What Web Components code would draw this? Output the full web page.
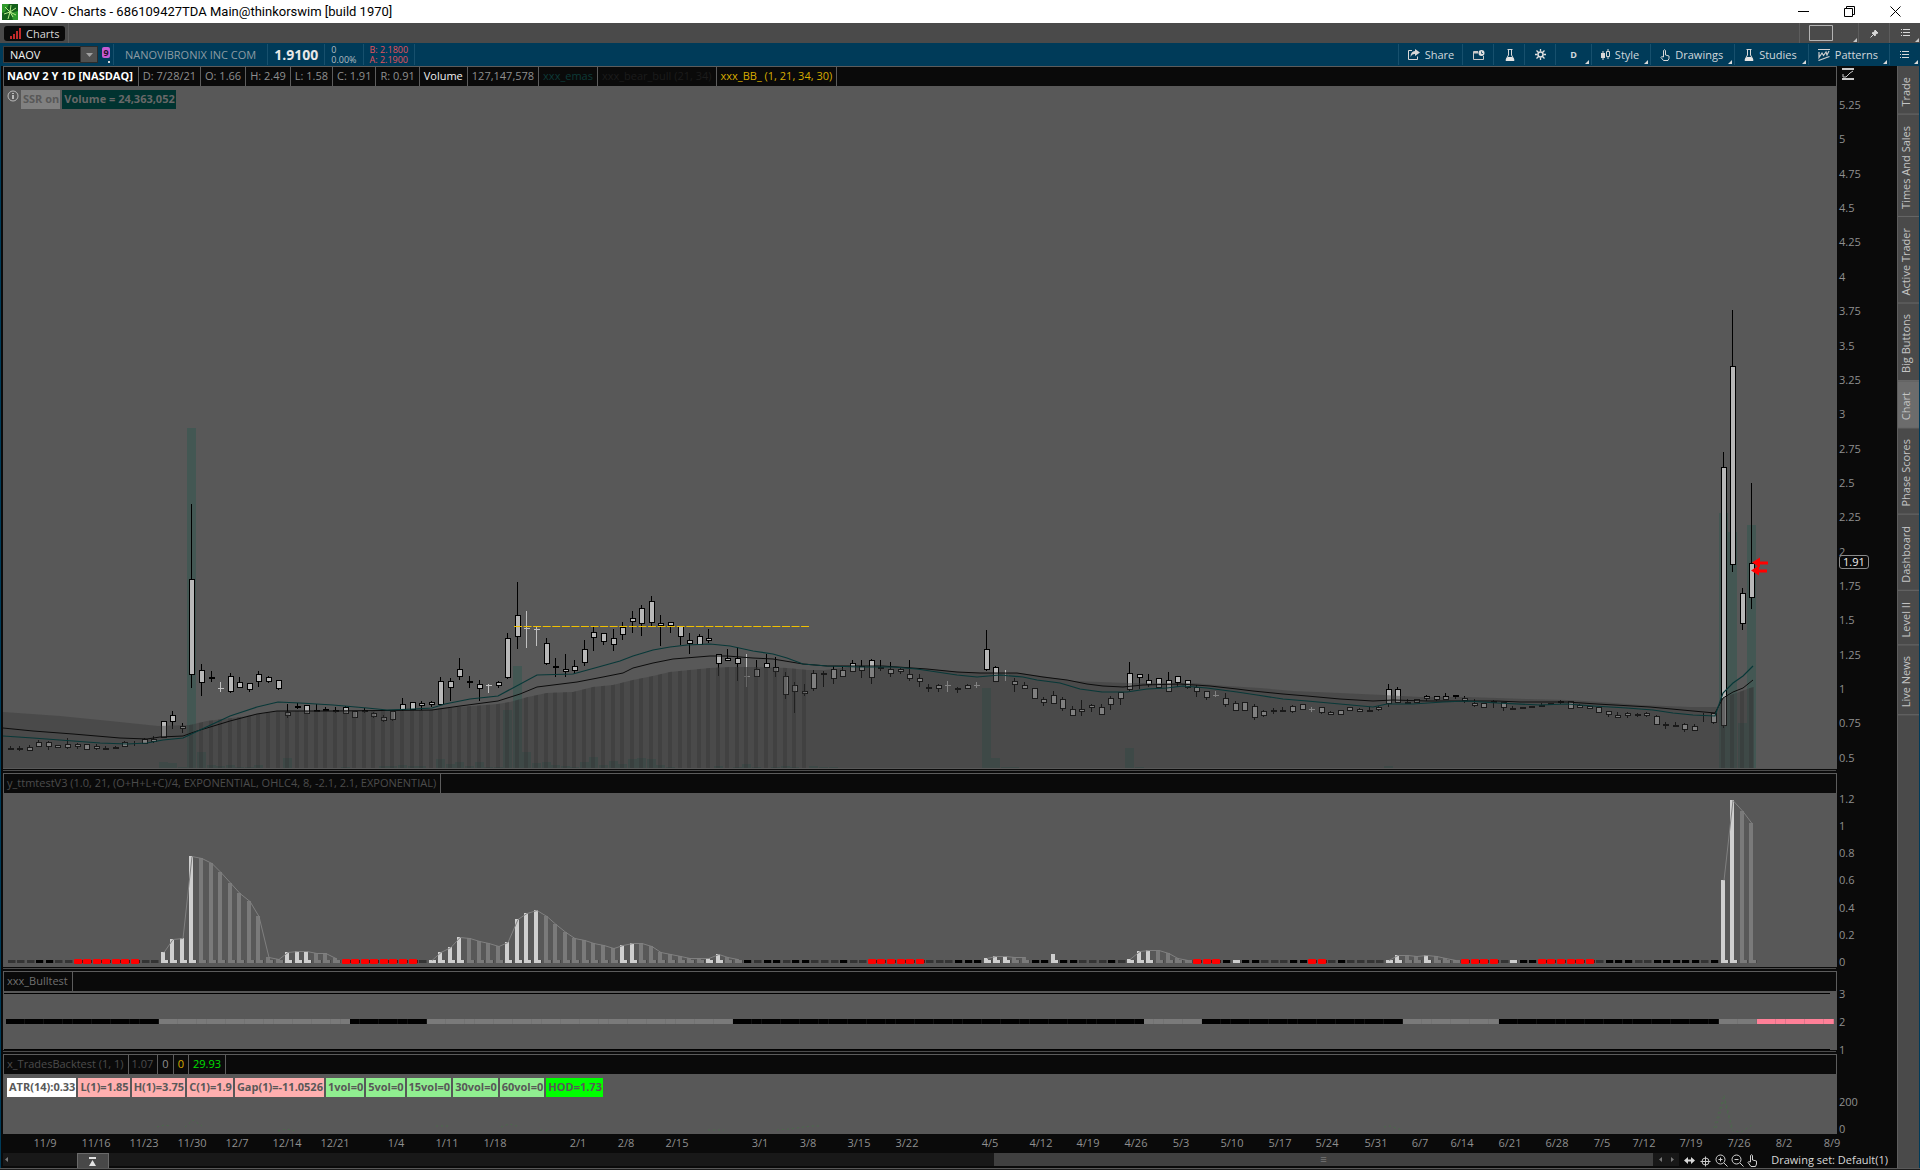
<!DOCTYPE html>
<html lang="en">

<head>
    <meta charset="UTF-8">
    <meta name="viewport" content="width=device-width, initial-scale=1.0">
    <title>NAOV - Charts</title>
    <style>
        html,
        body {
            height: 100%;
            margin: 0;
        }

        body {
            background: #0a0a0a;
            color: #8f8f8f;
            font: 11px/16px "Open Sans", "Noto Sans", sans-serif;
            overflow: hidden;
        }
    </style>
</head>

<body>
    <template id="trading-app">
        <style>
            :host {
                display: flex;
                flex-direction: column;
                height: 100%;
                min-height: 600px;
            }

            main {
                display: flex;
                flex: 1;
                min-height: 0;
                border-left: 1px solid #003b59;
                border-right: 1px solid #003b59;
            }

            .charts {
                display: flex;
                flex-direction: column;
                flex: 1;
                min-width: 0;
                padding-left: 2px;
            }

            .labels {
                display: flex;
                gap: 2px;
                padding: 4px;
            }

            .floor {
                height: 1px;
                background: #585858;
                border-bottom: 1px solid #1c1c1c;
            }
        </style>
        <window-title>NAOV - Charts - 686109427TDA Main@thinkorswim [build 1970]</window-title>
        <tab-strip></tab-strip>
        <quote-bar></quote-bar>
        <main>
            <div class="charts">
                <study-pane size="707" axis="5.25 5 4.75 4.5 4.25 4 3.75 3.5 3.25 3 2.75 2.5 2.25 2 1.75 1.5 1.25 1 0.75 0.5"
                    mark="1.91">
                    <study-cell slot="head" tone="title">NAOV 2 Y 1D [NASDAQ]</study-cell>
                    <study-cell slot="head">D: 7/28/21</study-cell>
                    <study-cell slot="head">O: 1.66</study-cell>
                    <study-cell slot="head">H: 2.49</study-cell>
                    <study-cell slot="head">L: 1.58</study-cell>
                    <study-cell slot="head">C: 1.91</study-cell>
                    <study-cell slot="head">R: 0.91</study-cell>
                    <study-cell slot="head" tone="white">Volume</study-cell>
                    <study-cell slot="head">127,147,578</study-cell>
                    <study-cell slot="head" tone="teal">xxx_emas</study-cell>
                    <study-cell slot="head" tone="dark">xxx_bear_bull (21, 34)</study-cell>
                    <study-cell slot="head" tone="gold">xxx_BB_ (1, 21, 34, 30)</study-cell>
                    <price-plot></price-plot>
                    <div class="labels" slot="over">
                        <svg width="12" height="12" viewBox="0 0 12 12" fill="none" stroke="#b8b8b8">
                            <circle cx="6" cy="6" r="5" />
                            <path d="M6 5v4M6 3v1" stroke-width="2" />
                        </svg>
                        <value-label tone="ssr">SSR on</value-label>
                        <value-label tone="volume">Volume = 24,363,052</value-label>
                    </div>
                </study-pane>
                <study-pane size="198" axis="1.2 1 0.8 0.6 0.4 0.2 0">
                    <study-cell slot="head" tone="dim">y_ttmtestV3 (1.0, 21, (O+H+L+C)/4, EXPONENTIAL, OHLC4, 8, -2.1, 2.1, EXPONENTIAL)</study-cell>
                    <momentum-plot></momentum-plot>
                </study-pane>
                <study-pane size="83" axis="3 2 1">
                    <study-cell slot="head" tone="mid">xxx_Bulltest</study-cell>
                    <trend-plot></trend-plot>
                </study-pane>
                <study-pane size="80" axis="200 0" last>
                    <study-cell slot="head" tone="dim">x_TradesBacktest (1, 1)</study-cell>
                    <study-cell slot="head" tone="dim">1.07</study-cell>
                    <study-cell slot="head">0</study-cell>
                    <study-cell slot="head" tone="gold">0</study-cell>
                    <study-cell slot="head" tone="green">29.93</study-cell>
                    <backtest-plot></backtest-plot>
                    <div class="labels" slot="over">
                        <value-label tone="white">ATR(14):0.33</value-label>
                        <value-label tone="pink">L(1)=1.85</value-label>
                        <value-label tone="pink">H(1)=3.75</value-label>
                        <value-label tone="pink">C(1)=1.9</value-label>
                        <value-label tone="pink">Gap(1)=-11.0526</value-label>
                        <value-label tone="light">1vol=0</value-label>
                        <value-label tone="light">5vol=0</value-label>
                        <value-label tone="light">15vol=0</value-label>
                        <value-label tone="light">30vol=0</value-label>
                        <value-label tone="light">60vol=0</value-label>
                        <value-label tone="lime">HOD=1.73</value-label>
                    </div>
                </study-pane>
                <date-axis></date-axis>
                <chart-footer></chart-footer>
            </div>
            <side-tabs></side-tabs>
        </main>
        <div class="floor"></div>
    </template>

    <template id="window-title">
        <style>
            :host {
                display: flex;
                align-items: center;
                height: 23px;
                padding-right: 2px;
                background: #fff;
                color: #000;
                font-family: Roboto, "Noto Sans", sans-serif;
                font-size: 13px;
            }

            .logo {
                margin: 0 5px 0 2px;
            }

            h1 {
                flex: 1;
                margin: 0;
                font-weight: 400;
                font-size: inherit;
            }

            button {
                display: grid;
                place-items: center;
                width: 46px;
                height: 23px;
                padding: 0;
                border: 0;
                background: none;
            }
        </style>
        <svg class="logo" width="16" height="16" viewBox="0 0 16 16">
            <path fill="#14601a" d="M0 0h16v16H0z" />
            <path fill="#2f9a2c" d="M0 0h7L3 8 0 9zM9 9l7-2v9h-5z" />
            <path stroke="#b9ec8a" fill="none" d="M8 8 3 3M8 8l1-7M8 8l6-4M8 8l6 3M8 8 6 15M8 8l-6 2M8 8l3 5" />
        </svg>
        <h1><slot></slot></h1>
        <button aria-label="Minimize"><svg width="11" height="11" stroke="#000"><path d="M0 5.5h11" /></svg></button>
        <button aria-label="Restore"><svg width="11" height="11" fill="none" stroke="#000"><path d="M.5 2.5h8v8h-8zM2.5 2V.5h8v8H9" /></svg></button>
        <button aria-label="Close"><svg width="11" height="11" stroke="#000"><path d="M.5 .5l10 10M10.5 .5l-10 10" /></svg></button>
    </template>

    <template id="tab-strip">
        <style>
            :host {
                display: flex;
                justify-content: space-between;
                height: 20px;
                background: #4a4a4a;
            }

            nav,
            .tools {
                display: flex;
                align-items: center;
            }

            nav {
                padding: 0 3px 0 4px;
                border-right: 1px solid #5c5c5c;
            }

            nav button {
                display: flex;
                align-items: center;
                gap: 5px;
                height: 15px;
                padding: 0 6px;
                border: 0;
                border-radius: 3px;
                background: #0a0a0a;
                color: #d8d8d8;
                font: inherit;
                line-height: 15px;
            }

            .tools button {
                position: relative;
                display: grid;
                place-items: center;
                width: 31px;
                height: 20px;
                padding: 0;
                border: 0;
                border-left: 1px solid #5c5c5c;
                background: none;
            }

            .tools button.wide {
                width: 59px;
                justify-items: start;
                padding-left: 9px;
            }

            .menu::after {
                content: "";
                position: absolute;
                right: 1px;
                bottom: 1px;
                border: 2px solid;
                border-color: transparent #c8c8c8 #c8c8c8 transparent;
            }
        </style>
        <nav>
            <button>
                <svg width="11" height="11" fill="#c22a2a"><path d="M0 8h2v3H0zM3 6h2v5H3zM6 3h2v8H6zM9 0h2v11H9z" /></svg>Charts
            </button>
        </nav>
        <div class="tools">
            <button class="wide menu" aria-label="Layout"><svg width="24" height="16" fill="none" stroke="#b4b4b4"><path d="M.5 .5h23v15H.5z" /></svg></button>
            <button aria-label="Pin"><svg width="9" height="9" viewBox="0 0 9 9" fill="#d8d8d8" stroke="#d8d8d8"><path d="M5 1l3 3-2 .5L5 7 2 4l2.5-1zM3 6 .5 8.5" /></svg></button>
            <button class="menu" aria-label="Menu"><svg width="9" height="8" stroke="#d8d8d8"><path d="M0 .5h1M2 .5h7M0 3.5h1M2 3.5h7M0 6.5h1M2 6.5h7" /></svg></button>
        </div>
    </template>

    <template id="quote-bar">
        <style>
            :host {
                display: flex;
                align-items: stretch;
                height: 21px;
                padding: 1px 0 1px 3px;
                background: #003b59;
            }

            form {
                display: flex;
                align-items: center;
                margin: 0;
            }

            input {
                box-sizing: border-box;
                width: 77px;
                height: 17px;
                padding: 0 6px;
                border: 1px solid #3b3b3b;
                border-right: 0;
                background: #0a0a0a;
                color: #f0f0f0;
                font: inherit;
            }

            form button {
                width: 18px;
                height: 17px;
                padding: 0;
                border: 1px solid #2c2c2c;
                background: #505050;
            }

            form svg {
                display: block;
                margin: auto;
            }

            .link {
                position: relative;
                width: 8px;
                height: 11px;
                margin: 3px 3px 0 4px;
                padding: 0;
                border: 0;
                border-radius: 2px;
                background: #c45ad2;
                color: #24102a;
                font: 700 9px/11px "Open Sans", sans-serif;
            }

            .link::after {
                content: "";
                position: absolute;
                right: 0;
                bottom: -5px;
                border: 1px solid #d8d8d8;
            }

            .field {
                display: flex;
                align-items: center;
                padding: 0 11px;
                border-left: 1px solid #17506d;
                color: #8d9ba3;
            }

            .last {
                padding: 0 6px;
                color: #e8e8e8;
                font-size: 14px;
                font-weight: 700;
            }

            .pair {
                flex-direction: column;
                align-items: flex-start;
                justify-content: center;
                padding: 0 6px;
                color: #b4bcc0;
                font-size: 9px;
                line-height: 10px;
            }

            .ask {
                color: #e0525c;
                border-right: 1px solid #17506d;
            }

            .tools {
                display: flex;
                margin-left: auto;
            }
        </style>
        <form>
            <input aria-label="Symbol" value="NAOV">
            <button type="button" aria-label="Symbol list"><svg width="7" height="4" fill="#a0a0a0"><path d="M0 0h7L3.5 4z" /></svg></button>
        </form>
        <button class="link" aria-label="Link group">9</button>
        <div class="field">NANOVIBRONIX INC COM</div>
        <div class="field last">1.9100</div>
        <div class="field pair"><span>0</span><span>0.00%</span></div>
        <div class="field pair ask"><span>B: 2.1800</span><span>A: 2.1900</span></div>
        <div class="tools">
            <tool-button icon="share">Share</tool-button>
            <tool-button icon="snapshot"></tool-button>
            <tool-button icon="flask"></tool-button>
            <tool-button icon="gear"></tool-button>
            <tool-button icon="none" menu>D</tool-button>
            <tool-button icon="style" menu>Style</tool-button>
            <tool-button icon="hand" menu>Drawings</tool-button>
            <tool-button icon="flask" menu>Studies</tool-button>
            <tool-button icon="patterns" menu>Patterns</tool-button>
            <tool-button icon="list" menu></tool-button>
        </div>
    </template>

    <template id="side-tabs">
        <style>
            :host {
                display: flex;
                flex-direction: column;
                width: 21px;
                background: #4a4a4a;
                border-left: 1px solid #5e5e5e;
            }

            button {
                padding: 7px 0 11px 5px;
                border: 0;
                border-top: 1px solid #686868;
                background: none;
                color: #c4c4c4;
                font: inherit;
                writing-mode: vertical-rl;
                transform: rotate(180deg);
                text-align: center;
            }

            button[aria-selected=true] {
                background: #6c6c6c;
            }
        </style>
    </template>

    <template id="chart-footer">
        <style>
            :host {
                display: flex;
                align-items: flex-start;
                height: 15px;
            }

            .track {
                display: flex;
                flex: 1;
                height: 13px;
                background: #181818;
            }

            .gap {
                box-sizing: border-box;
                display: flex;
                flex: 72;
                align-items: center;
                padding-left: 2px;
            }

            .lift {
                display: grid;
                place-items: center;
                width: 32px;
                height: 16px;
                padding: 0;
                border: 1px solid #6a6a6a;
                border-bottom: 0;
                background: #484848;
            }

            .space {
                flex: 887;
            }

            .thumb {
                flex: 661;
                background: #404040;
                text-align: center;
                color: #777;
                line-height: 12px;
            }

            .ends {
                display: flex;
                align-items: center;
                justify-content: space-around;
                width: 26px;
            }

            .tools {
                display: flex;
                align-items: center;
                gap: 3px;
                padding: 0 9px 0 4px;
                color: #d8d8d8;
            }

            .tools button {
                display: flex;
                padding: 0;
                border: 0;
                background: none;
                color: inherit;
                font: inherit;
                line-height: 14px;
            }

            .tools .set {
                margin-left: 10px;
            }
        </style>
        <div class="track">
            <div class="gap"><svg width="4" height="7" fill="#777"><path d="M3 1v5L0 3.5z" /></svg></div>
            <button class="lift" aria-label="Expand"><svg width="9" height="9" fill="#e4e4e4"><path d="M1 0h7v2H1zM4.5 3 8 9H1z" /></svg></button>
            <div class="space"></div>
            <div class="thumb">&#8801;</div>
            <div class="ends">
                <svg width="4" height="7" fill="#777"><path d="M4 1v5L1 3.5z" /></svg>
                <svg width="4" height="7" fill="#777"><path d="M0 1v5l3-2.5z" /></svg>
            </div>
        </div>
        <div class="tools">
            <button aria-label="Pan"><svg width="13" height="13" fill="#d8d8d8"><path d="M1 6.5 5 3v7zM12 6.5 8 3v7zM5 5.5h3v2H5z" /></svg></button>
            <button aria-label="Crosshair"><svg width="13" height="13" fill="none" stroke="#c8c8c8"><circle cx="6.5" cy="7.5" r="3.5" /><path d="M6.5 2.5v10M1.5 7.5h10" /></svg></button>
            <button aria-label="Zoom in"><svg width="13" height="13" fill="none" stroke="#d0d0d0"><circle cx="5.5" cy="5.5" r="4.5" /><path d="M9 9l3.5 3.5M3.5 5.5h4M5.5 3.5v4" /></svg></button>
            <button aria-label="Zoom out"><svg width="13" height="13" fill="none" stroke="#d0d0d0"><circle cx="5.5" cy="5.5" r="4.5" /><path d="M9 9l3.5 3.5M3.5 5.5h4" /></svg></button>
            <button aria-label="Pointer"><svg width="11" height="13" fill="none" stroke="#d0d0d0"><path d="M3.5 7V1.5q1-1.5 2 0V6l4 1v3l-1 2.5H4L1 8.5q0-1.5 2.5-.5z" /></svg></button>
            <button class="set">Drawing set: Default(1)</button>
        </div>
    </template>

    <script>
        // bar i sits at FIRST + STEP * i on every plot
        const FIRST = 10.6;
        const STEP = 9.57;
        const barX = i => Math.round(FIRST + STEP * i);

        // high,top,bottom,low for each bar; d = doji, g = unchanged, l = wick only
        const CANDLES = `d746,748,748,750 d746,748,748,751 745,747,751,751 740,742,747,747 741,742,747,750 745,745,748,748
            738,744,748,749 743,744,747,749 744,744,750,750 744,746,749,750 d746,748,748,749 d746,747,747,749
            741,742,747,747 l741,0,0,746 738,739,744,744 736,739,742,743 721,721,738,738 711,715,722,729
            723,726,729,733 504,579,675,688 664,670,683,696 d671,677,677,682 g682,688,688,692 673,676,692,693
            677,682,688,688 683,683,690,692 671,674,682,687 676,677,682,683 680,680,689,690 704,712,716,718
            d703,706,706,709 705,705,714,714 d704,710,710,711 d707,709,709,711 d707,710,710,713 706,707,714,714
            711,711,718,718 d708,710,710,713 712,713,717,718 715,717,721,722 711,711,720,721 698,704,710,711
            702,702,710,710 701,703,706,710 701,702,705,707 677,681,705,705 678,681,688,701 658,669,677,680
            d676,681,681,688 680,684,689,701 g684,685,685,693 681,682,686,688 633,638,678,679 582,615,637,649
            g611,628,628,648 g627,629,629,646 638,643,664,665 d658,666,666,677 654,669,672,677 660,666,671,674
            640,649,663,666 627,632,638,651 633,633,642,645 629,638,645,651 622,627,635,640 611,618,622,633
            605,608,624,636 596,601,623,627 615,623,626,646 622,622,626,633 626,626,637,645 633,640,644,654
            634,636,645,645 629,638,641,643 654,654,664,676 649,658,661,661 647,658,664,681 g654,676,676,687
            660,669,677,677 654,663,668,668 657,667,672,677 672,676,695,699 682,685,692,713 684,691,694,696
            670,673,689,691 d671,673,673,687 666,669,679,684 667,670,677,677 660,663,672,672 660,666,671,678
            659,660,678,684 d660,667,667,671 662,669,674,677 668,669,672,674 660,674,679,681 674,678,682,687
            d684,687,687,692 684,685,689,692 g681,685,685,692 d687,688,688,693 684,685,689,689 g682,685,685,688
            630,649,670,671 666,667,682,682 g670,675,675,681 678,681,685,692 682,685,689,689 688,688,699,699
            697,699,703,706 691,695,704,704 697,699,709,711 706,709,716,716 700,709,712,716 704,705,708,712
            704,707,715,715 696,698,705,710 692,692,699,705 662,673,690,691 674,674,678,689 674,680,685,687
            678,678,688,688 672,680,692,692 676,676,683,687 680,680,688,689 685,687,692,697 691,691,698,700
            g691,695,695,697 693,698,705,707 701,703,711,711 702,702,711,711 704,706,718,720 710,711,716,717
            d708,710,710,714 d707,710,710,712 705,706,712,713 704,704,710,710 g707,709,709,712 707,707,713,714
            711,712,715,715 710,710,715,715 707,707,711,711 708,709,712,712 d707,710,710,711 706,707,710,711
            684,689,704,707 687,689,703,703 d699,702,702,704 699,699,703,703 695,696,699,701 696,696,700,701
            693,696,700,700 d695,695,695,699 696,698,701,703 699,703,706,707 703,703,708,708 700,701,703,708
            702,702,708,711 d706,708,708,710 d707,707,707,709 d706,706,706,707 d703,705,705,707 d703,703,703,704
            d700,701,701,704 701,701,709,709 704,705,708,708 706,706,709,709 707,707,713,713 711,711,715,717
            712,715,718,718 712,713,716,718 d713,714,714,717 712,713,716,717 715,716,725,725 d722,724,724,729
            d722,725,725,727 723,724,730,732 724,726,731,731 l713,0,0,722 713,713,723,724 452,467,726,728
            310,366,565,572 588,593,624,630 483,563,598,609`.trim().split(/\s+/);

        // bar:top of its volume column
        const VOLUME = `16:762 17:763 18:767 19:428 20:752 21:765 22:766 23:765 24:767 25:767 26:765 29:758 35:767 39:766
            40:766 41:765 42:766 43:766 44:768 45:759 46:764 47:762 48:766 49:762 50:767 51:767 52:710 53:666 54:752 55:763
            56:762 57:765 58:766 59:767 60:762 61:757 62:765 63:761 64:764 65:759 66:758 67:759 68:765 69:767
            70:768 71:768 74:766 76:767 77:764 78:767 80:767 81:766 82:767 84:766 85:767 86:767 89:768 90:768 94:768 95:768
            102:688 103:758 104:767 105:767 107:768 117:748 118:767 119:768 121:768 144:766 178:768 179:513 180:532 181:723 182:525`.split(/\s+/);

        const CLOUD = `3,712 60,716 110,721 158,726 190,725 207,721 240,717 278,711 430,710 440,708 473,706 498,704 510,702
            528,697 547,693 573,692 593,687 613,685 633,680 653,676 670,672 710,668 730,667 753,667 787,668 807,670
            825,670 850,667 893,667 927,669 960,672 987,673 1020,673 1047,677 1073,681 1100,682 1127,683 1193,683
            1227,686 1260,688 1293,691 1340,693 1383,695 1420,697 1467,697 1527,699 1567,700 1600,702 1640,705
            1690,707 1717,707 1723,698 1730,695 1742,691 1750,688 1754,687 1754,768 3,768`;

        const FAST = `3,736 33,738 100,743 127,744 147,743 163,740 183,738 200,730 230,716 257,707 278,702 300,703 333,705
            367,708 387,710 413,709 432,708 445,704 470,699 498,696 537,675 573,674 602,666 620,661 633,656 653,650
            670,647 687,645 710,644 730,646 753,651 773,654 787,658 803,664 827,666 860,667 893,667 917,669 937,672
            957,675 977,677 1000,675 1023,677 1037,680 1060,683 1080,689 1102,692 1127,692 1147,689 1167,688
            1183,686 1207,688 1237,692 1257,695 1283,699 1307,701 1340,704 1373,707 1387,704 1413,704 1443,702
            1467,701 1497,703 1540,705 1567,704 1593,706 1627,708 1653,710 1673,713 1693,715 1715,716 1723,693
            1733,683 1743,676 1753,666`;

        const SLOW = `3,728 33,731 73,734 120,738 147,739 160,737 183,736 197,731 230,721 257,714 277,711 333,711 432,710
            460,706 498,701 520,694 537,687 577,682 603,677 623,673 633,668 653,663 673,659 710,656 727,656 753,658
            773,659 803,664 827,666 883,666 927,669 957,672 980,673 1017,673 1043,677 1067,680 1087,684 1103,686
            1123,687 1143,685 1180,684 1210,686 1237,689 1253,691 1283,694 1307,696 1340,699 1373,701 1393,700
            1427,701 1497,701 1520,702 1567,702 1597,704 1650,707 1693,711 1715,713 1723,698 1733,692 1743,688
            1753,680`;

        // one entry per bar: d dark, b black, r red, w/g rising or falling column with its top
        const MOMENTUM = `d d d b b d d r r r r r r r d d w952 w939 w938 w856 g858 g863 g872 g883 g893 g901 g916 g957 g959
            w952 w951 w951 g953 g953 g958 r r r r r r r r d w960 w952 w947 w937 g938 g941 g943 g946 w942 w919 w913
            w910 g916 g924 g932 g938 g940 g943 g945 g948 w945 w943 g943 g946 g952 g954 g956 g958 g958 w958 w954 g957
            g959 b d b b d b b d d d b d d r r r r r r d d d b b b w958 w956 w956 g957 g957 b b w954 b b d d d b d
            w959 w951 w950 g950 g953 g958 g960 r r r b w960 b b d d d b b r r d b d d d d w960 w955 g955 g956 w955
            g956 g958 g960 r r r r d w960 b b r r r r r r d b b b d d b b b b b d b w880 w800 g811 g823`.split(/\s+/);

        const ICONS = {
            none: '',
            share: '<svg width="12" height="11" viewBox="0 0 12 11"><path d="M4 1.5H.5v9h9V7.5" fill="none" stroke="#d8d8d8"/><path d="M7 0l5 3.5L7 7V5Q4 4.5 2.5 8 2.5 2.5 7 2z" fill="#d8d8d8"/></svg>',
            snapshot: '<svg width="12" height="10" viewBox="0 0 12 10"><path d="M5 1.5H.5v8h10V6" fill="none" stroke="#c8c8c8"/><path d="M1 2h4v1.5H1z" fill="#c8c8c8"/><circle cx="8.5" cy="3" r="3" fill="#e0e0e0"/><path d="M8.5 1.5v2h1.5" fill="none" stroke="#003b59" stroke-width=".8"/></svg>',
            flask: '<svg width="10" height="12" viewBox="0 0 10 12"><path d="M2.5 .5h5M3.5 1v5L1 10.5h8L6.5 6V1" fill="none" stroke="#d8d8d8"/><path d="M2.5 8h5L9.5 12H.5z" fill="#e4e4e4"/></svg>',
            gear: '<svg width="11" height="11" viewBox="0 0 11 11" fill="none" stroke="#e0e0e0"><circle cx="5.5" cy="5.5" r="2.5" stroke-width="1.5"/><path d="M5.5 0v2.5M5.5 8.5V11M0 5.5h2.5M8.5 5.5H11M1.5 1.5l2 2M7.5 7.5l2 2M9.5 1.5l-2 2M3.5 7.5l-2 2" stroke-width="1.3"/></svg>',
            style: '<svg width="9" height="11" viewBox="0 0 9 11"><path d="M0 4h4v5H0zM1.5 2h1v9h-1z" fill="#d8d8d8"/><path d="M5.5 2.5h3v5h-3zM7 0v2.5M7 7.5V10" fill="none" stroke="#d8d8d8"/></svg>',
            hand: '<svg width="10" height="12" viewBox="0 0 10 12" fill="none" stroke="#d8d8d8"><path d="M3.5 8V1.5q1-1.5 2 0V6l3.5 1v2.5L8 11.5H3.5L1 8.5q0-1.5 2.5-.5"/></svg>',
            patterns: '<svg width="12" height="12" viewBox="0 0 12 12" fill="none" stroke="#d0d0d0"><path d="M0 .5h12M.5 11.5 11.5 7.5M1 3v5.5L4 4l1.5 2.5L8 3l1 3 2-4" stroke-width="1.2"/></svg>',
            list: '<svg width="9" height="8" stroke="#d8d8d8"><path d="M0 .5h1M2 .5h7M0 3.5h1M2 3.5h7M0 6.5h1M2 6.5h7"/></svg>'
        };

        // copies the template named after the tag into a shadow root
        class TemplateElement extends HTMLElement {
            constructor() {
                super();
                const shadow = this.attachShadow({ mode: 'open' });
                shadow.appendChild(document.getElementById(this.localName).content.cloneNode(true));
            }
        }

        class TradingApp extends TemplateElement { }
        class WindowTitle extends TemplateElement { }
        class TabStrip extends TemplateElement { }
        class QuoteBar extends TemplateElement { }
        class ChartFooter extends TemplateElement { }

        class SideTabs extends TemplateElement {
            connectedCallback() {
                const names = ['Trade', 'Times And Sales', 'Active Trader', 'Big Buttons', 'Chart', 'Phase Scores', 'Dashboard', 'Level II', 'Live News'];
                this.setAttribute('role', 'tablist');
                for (const name of names) {
                    const tab = document.createElement('button');
                    tab.textContent = name;
                    tab.setAttribute('role', 'tab');
                    tab.setAttribute('aria-selected', name === 'Chart');
                    this.shadowRoot.appendChild(tab);
                }
            }
        }

        class ToolButton extends HTMLElement {
            connectedCallback() {
                const icon = this.getAttribute('icon');
                const small = icon === 'none' ? 'small' : '';
                this.attachShadow({ mode: 'open' }).innerHTML = `
                    <style>
                        :host { display: flex; position: relative; border-left: 1px solid #17506d; }
                        button { display: flex; align-items: center; justify-content: center; gap: 5px; min-width: 30px;
                            padding: 0 8px 0 9px; border: 0; background: none; color: #d0d8dc; font: inherit; }
                        :host([menu]) button { padding-right: 11px; }
                        :host([menu]) .small { padding: 0 14px; font-size: 9px; font-weight: 700; }
                        :host([menu])::after { content: ""; position: absolute; right: 2px; bottom: 1px;
                            border: 2px solid; border-color: transparent #d8d8d8 #d8d8d8 transparent; }
                    </style>
                    <button class="${small}" aria-label="${this.textContent || icon}">${ICONS[icon]}<slot></slot></button>`;
            }
        }

        class StudyCell extends HTMLElement {
            connectedCallback() {
                this.attachShadow({ mode: 'open' }).innerHTML = `
                    <style>
                        :host { display: block; padding: 1px 4px 2px; border-right: 1px solid #5c5c5c; white-space: nowrap; }
                        :host([tone=title]) { padding: 1px 5px 2px 3px; color: #fff; font-weight: 700; }
                        :host([tone=white]) { color: #f0f0f0; }
                        :host([tone=teal]) { color: #0d3a38; }
                        :host([tone=dark]) { color: #1c1c1c; }
                        :host([tone=gold]) { color: #d8ac00; }
                        :host([tone=dim]) { padding-left: 3px; color: #4c4c4c; }
                        :host([tone=mid]) { padding-left: 3px; color: #707070; }
                        :host([tone=green]) { color: #00e000; }
                    </style>
                    <slot></slot>`;
            }
        }

        class ValueLabel extends HTMLElement {
            connectedCallback() {
                this.attachShadow({ mode: 'open' }).innerHTML = `
                    <style>
                        :host { display: block; padding: 1px 1px 2px 2px; color: #585858; font-weight: 700; white-space: nowrap; }
                        :host([tone=ssr]) { background: #808080; }
                        :host([tone=volume]) { background: #003330; color: #686868; }
                        :host([tone=white]) { background: #fff; }
                        :host([tone=pink]) { background: #ffafaf; }
                        :host([tone=light]) { background: #90ee90; }
                        :host([tone=lime]) { background: #00ff00; }
                    </style>
                    <slot></slot>`;
            }
        }

        class StudyPane extends HTMLElement {
            connectedCallback() {
                const ticks = this.getAttribute('axis').split(' ').map(t => `<span>${t}</span>`).join('');
                const mark = this.getAttribute('mark');
                const corner = mark ? '<svg width="12" height="12" fill="none" stroke="#c8c8c8"><path d="M0 1h12M0 11h12" stroke-width="2"/><path d="M1 6v3h3L8 5l3-2"/></svg>' : '';
                this.attachShadow({ mode: 'open' }).innerHTML = `
                    <style>
                        :host { display: flex; flex: ${this.getAttribute('size')} 1 0; min-height: 0; }
                        .pane { display: flex; flex-direction: column; flex: 1; min-width: 0; }
                        header { display: flex; height: 19px; border: 1px solid #5c5c5c; border-bottom: 0; background: #0a0a0a; overflow: hidden; }
                        .plot { position: relative; flex: 1; min-height: 0; background: #585858; }
                        .over { position: absolute; top: 0; left: 0; }
                        .split { height: 1px; margin-right: 1px; border: solid #0a0a0a; border-width: 1px 0 2px; background: #4c4c4c; }
                        :host([last]) .split { display: none; }
                        aside { position: relative; display: flex; flex-direction: column; width: 60px; }
                        .corner { height: 20px; padding: 2px 0 0 5px; box-sizing: border-box; }
                        .ticks { display: flex; flex: 1; min-height: 0; flex-direction: column; justify-content: space-between;
                            padding: ${mark ? '11px 0 7px 2px' : '0 0 1px 2px'}; }
                        :host([size="83"]) .ticks { margin-top: -5px; padding-bottom: 0; }
                        :host([size="83"]) aside { overflow: hidden; margin-bottom: -4px; }
                        :host([size="198"]) .ticks { margin-top: -2px; }
                        :host([size="80"]) .ticks { padding: 20px 0 0 2px; margin-bottom: -3px; }
                        output { position: absolute; left: 2px; top: 69%; margin-top: 1px; padding: 0 3px; border: 1px solid #8a8a8a;
                            border-radius: 3px; background: #0a0a0a; color: #f0f0f0; line-height: 12px; }
                    </style>
                    <div class="pane">
                        <header><slot name="head"></slot></header>
                        <div class="plot"><slot></slot><div class="over"><slot name="over"></slot></div></div>
                        <div class="split"></div>
                    </div>
                    <aside>
                        <div class="corner">${corner}</div>
                        <div class="ticks">${ticks}</div>
                        ${mark ? `<output>${mark}</output>` : ''}
                    </aside>`;
            }
        }

        // base of all plots: an svg that fills the pane
        class PlotElement extends HTMLElement {
            connectedCallback() {
                this.attachShadow({ mode: 'open' }).innerHTML = `
                    <style>
                        :host { display: block; height: 100%; }
                        svg { display: block; width: 100%; height: 100%; }
                    </style>
                    <svg viewBox="${this.box}" preserveAspectRatio="none">${this.draw()}</svg>`;
            }
        }

        class PricePlot extends PlotElement {
            box = '3 86 1834 683';

            candle(entry, i) {
                const kind = /[a-z]/.test(entry[0]) ? entry[0] : '';
                const [high, top, bottom, low] = entry.replace(kind, '').split(',').map(Number);
                const x = barX(i);
                const stroke = kind === 'g' ? '#c0c0c0' : '#000';
                let out = `<path d="M${x - .5} ${high}V${low}" stroke="${stroke}"/>`;
                if (kind === 'd') {
                    out += `<rect x="${x - 3}" y="${top}" width="6" height="2"/>`;
                } else if (kind === 'g') {
                    out += `<path d="M${x - 3} ${top + .5}h6" stroke="#c0c0c0"/>`;
                } else if (!kind) {
                    out += `<rect x="${x - 2.5}" y="${top + .5}" width="5" height="${Math.max(bottom - top - 1, 1)}" fill="#b8b8b8" stroke="#000"/>`;
                }
                return out;
            }

            draw() {
                const volume = VOLUME.map(v => {
                    const [i, top] = v.split(':').map(Number);
                    return `<rect x="${barX(i) - 5}" y="${top}" width="9" height="${768 - top}"/>`;
                }).join('');
                const stripes = CANDLES.map((c, i) => (i > 18 && i < 84) || i > 178
                    ? `<rect x="${barX(i) - 3}" y="640" width="4" height="128"/>` : '').join('');
                return `
                    <clipPath id="cloud"><polygon points="${CLOUD}"/></clipPath>
                    <g fill="#1e554b" fill-opacity=".35">${volume}</g>
                    ${CANDLES.map(this.candle).join('')}
                    <polygon points="${CLOUD}" fill="#3a3a3a" fill-opacity=".45"/>
                    <g clip-path="url(#cloud)" fill="#303030" fill-opacity=".35">${stripes}</g>
                    <polyline points="${SLOW}" fill="none" stroke="#0c0c0c"/>
                    <polyline points="${FAST}" fill="none" stroke="#083838" stroke-width="1.2"/>
                    <path d="M514 626.5h295" stroke="#f0c000" stroke-dasharray="8 1.57"/>
                    <path d="M1752 562.5l8-5v4h8v3h-8v3zM1751 570.5l8-5v4h8v3h-8v3z" fill="#f00"/>`;
            }
        }

        class MomentumPlot extends PlotElement {
            box = '3 793 1834 174';

            draw() {
                const colors = { d: '#343434', b: '#000', r: '#f00', w: '#cfcfcf', g: '#7a7a7a' };
                let marks = '';
                let line = '';
                let open = false;
                MOMENTUM.forEach((m, i) => {
                    const kind = m[0];
                    const top = Number(m.slice(1));
                    const x = barX(i);
                    if (kind === 'r') {
                        marks += `<rect x="${x - 4}" y="959" width="8" height="5" rx="1" fill="#f00"/>`;
                        marks += `<rect x="${x + 4}" y="960" width="1" height="3" fill="#5a1010"/>`;
                    } else {
                        marks += `<rect x="${x - 3}" y="960" width="7" height="3" fill="${colors[kind]}"/>`;
                        marks += `<rect x="${x + 4}" y="960" width="1" height="3" fill="#464646"/>`;
                    }
                    if (top) {
                        marks += `<rect x="${x - 3}" y="${top}" width="4" height="${963 - top}" fill="${colors[kind]}"/>`;
                        line += `${open ? 'L' : 'M'}${x} ${top + .5}`;
                    }
                    open = top > 0;
                });
                return `${marks}<path d="${line}" fill="none" stroke="#808080"/>`;
            }
        }

        class TrendPlot extends PlotElement {
            box = '3 991 1834 59';

            draw() {
                const runs = [[0, '#000'], [16, '#7a7a7a'], [36, '#000'], [44, '#7a7a7a'], [76, '#000'], [119, '#7a7a7a'],
                    [125, '#000'], [146, '#7a7a7a'], [156, '#000'], [179, '#7a7a7a'], [183, '#ff8098'], [191]];
                let out = '<path d="M4 993.5h1826M4 1049.5h1826" stroke="#000"/>';
                for (let r = 0; r < runs.length - 1; r++) {
                    for (let i = runs[r][0]; i < runs[r + 1][0]; i++) {
                        out += `<rect x="${barX(i) - 5}" y="1019" width="9" height="5" fill="${runs[r][1]}"/>`;
                        out += `<rect x="${barX(i) + 4}" y="1019" width="1" height="5" fill="${runs[r][1]}" fill-opacity=".8"/>`;
                    }
                }
                return out;
            }
        }

        class BacktestPlot extends PlotElement {
            box = '3 1074 1834 60';

            draw() {
                const trace = `M157 1127l7-2 6 1M185 1127l8-7 9 6M278 1131l9-2 8 2M436 1126h12M501 1127l8-3 8 2M540 1130l8 1 6-1
                    M708 1130h16M777 1130l12-1 22-3 10 0M1384 1127l6-1 12 4M1714 1128l10-33 9 36 8 1 13-8`;
                return `
                    <path d="${trace}" fill="none" stroke="#4c684c" stroke-dasharray="2 3"/>
                    <path d="M1716 1128l8-30 8 33" fill="none" stroke="#4c684c" stroke-dasharray="2 3"/>`;
            }
        }

        class DateAxis extends HTMLElement {
            connectedCallback() {
                const dates = [['11/9', 45], ['11/16', 96], ['11/23', 144], ['11/30', 192], ['12/7', 237], ['12/14', 287],
                    ['12/21', 335], ['1/4', 396], ['1/11', 447], ['1/18', 495], ['2/1', 578], ['2/8', 626], ['2/15', 677],
                    ['3/1', 760], ['3/8', 808], ['3/15', 859], ['3/22', 907], ['4/5', 990], ['4/12', 1041], ['4/19', 1088],
                    ['4/26', 1136], ['5/3', 1181], ['5/10', 1232], ['5/17', 1280], ['5/24', 1327], ['5/31', 1376],
                    ['6/7', 1420], ['6/14', 1462], ['6/21', 1510], ['6/28', 1557], ['7/5', 1602], ['7/12', 1644],
                    ['7/19', 1691], ['7/26', 1739], ['8/2', 1784], ['8/9', 1832]];
                let from = 3;
                const items = dates.map(([text, x]) => {
                    const item = `<span style="flex-grow: ${x - from}"><b>${text}</b></span>`;
                    from = x;
                    return item;
                }).join('');
                this.attachShadow({ mode: 'open' }).innerHTML = `
                    <style>
                        :host { display: flex; height: 19px; margin-right: 65px; line-height: 18px; }
                        span { display: flex; flex: 0 1 0; min-width: 0; justify-content: flex-end; }
                        b { flex: none; width: 40px; margin-right: -20px; font-weight: 400; text-align: center; }
                    </style>${items}`;
            }
        }

        customElements.define('tool-button', ToolButton);
        customElements.define('study-cell', StudyCell);
        customElements.define('value-label', ValueLabel);
        customElements.define('study-pane', StudyPane);
        customElements.define('price-plot', PricePlot);
        customElements.define('momentum-plot', MomentumPlot);
        customElements.define('trend-plot', TrendPlot);
        customElements.define('backtest-plot', BacktestPlot);
        customElements.define('date-axis', DateAxis);
        customElements.define('window-title', WindowTitle);
        customElements.define('tab-strip', TabStrip);
        customElements.define('quote-bar', QuoteBar);
        customElements.define('side-tabs', SideTabs);
        customElements.define('chart-footer', ChartFooter);
        customElements.define('trading-app', TradingApp);
    </script>

    <trading-app></trading-app>

</body>

</html>
